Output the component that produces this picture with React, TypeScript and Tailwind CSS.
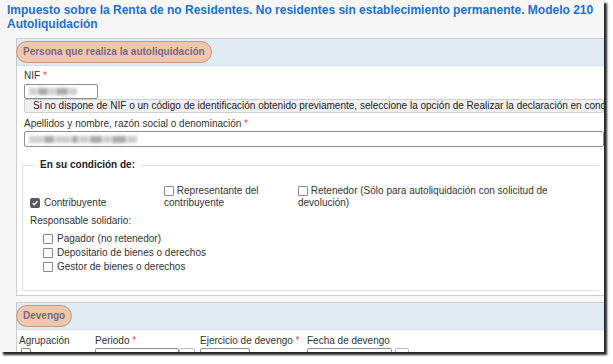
import type { ReactNode } from 'react'

const FONT = "font-['Liberation_Sans',Arial,sans-serif]"

function Req() {
  return <span className="text-[#d9534f]"> *</span>
}

function Box({ checked = false }: { checked?: boolean }) {
  if (checked) {
    return (
      <span className="inline-flex size-[10px] shrink-0 items-center justify-center rounded-[2px] bg-[#5a5a5a]">
        <svg viewBox="0 0 10 10" className="size-[8px]">
          <path d="M2 5.2 L4.1 7.2 L8 2.8" fill="none" stroke="#fff" strokeWidth="1.6" />
        </svg>
      </span>
    )
  }
  return <span className="inline-block size-[10px] shrink-0 rounded-[1px] border border-[#8a8a8a] bg-white" />
}

function Blur({ widths }: { widths: number[] }) {
  return (
    <div className="flex h-full items-center gap-[1px] pl-1 blur-[1.4px]">
      {widths.map((w, i) => (
        <span
          key={i}
          className={i % 2 ? 'h-[7px] bg-[#a9a9a9]' : 'h-[7px] bg-[#cfcfcf]'}
          style={{ width: w }}
        />
      ))}
    </div>
  )
}

function SectionHeader({ children }: { children: ReactNode }) {
  return (
    <div className="flex h-[27px] items-center border-b border-[#d5dde3] bg-[#dfeaf3]">
      <span className="-ml-px flex h-[22px] items-center rounded-full border border-[#c39a84] bg-[#f1c7ab] px-[6px] text-[10px] font-bold text-[#766a86]">
        {children}
      </span>
    </div>
  )
}

export default function App() {
  return (
    <div className={`h-[364px] w-[613px] bg-white ${FONT}`}>
      <div className="h-[352px] w-[604px] overflow-hidden bg-[#f6f6f6] shadow-[3px_3px_2px_rgba(0,0,0,0.85)]">
        <h1 className="whitespace-nowrap px-[7px] pt-[3px] text-[12px] font-bold leading-[14px] text-[#1f6fcc]">
          Impuesto sobre la Renta de no Residentes. No residentes sin establecimiento permanente. Modelo 210
          <br />
          Autoliquidación
        </h1>

        {/* Persona que realiza la autoliquidación */}
        <div className="ml-4 mt-[7px] border border-r-0 border-[#cdcdcd] bg-white text-[10px] leading-[12px] text-[#333]">
          <SectionHeader>Persona que realiza la autoliquidación</SectionHeader>
          <div className="flex flex-col pl-[7px] pt-[4px]">
            <div>
              NIF
              <Req />
            </div>
            <div className="mt-[2px] h-[15px] w-[74px] rounded-[2px] border border-[#8f8f8f]">
              <Blur widths={[8, 10, 6, 12, 8]} />
            </div>
            <div className="flex h-[14px] items-center whitespace-nowrap rounded-[2px] border border-[#cfcfcf] bg-[#efefef] pl-[8px] text-[#222]">
              Si no dispone de NIF o un código de identificación obtenido previamente, seleccione la opción de Realizar la declaración en cond
            </div>
            <div className="mt-[5px]">
              Apellidos y nombre, razón social o denominación
              <Req />
            </div>
            <div className="mt-[1px] h-[16px] rounded-[2px] border border-[#8f8f8f]">
              <Blur widths={[14, 10, 16, 6, 10, 12, 8, 14, 10]} />
            </div>
          </div>

          <fieldset className="mx-[5px] mt-[12px] mb-[4px] border border-r-0 border-[#dedede] pb-[17px] pl-[7px]">
            <legend className="ml-[4px] px-[6px] font-bold text-[#222]">En su condición de:</legend>
            <div className="mt-[14px] grid grid-cols-[134px_134px_1fr] items-end">
              <label className="flex items-center gap-[4px]">
                <Box checked />
                Contribuyente
              </label>
              <label className="block">
                <span className="inline-flex items-center align-middle">
                  <Box />
                </span>{' '}
                Representante del
                <br />
                contribuyente
              </label>
              <label className="block">
                <span className="inline-flex items-center align-middle">
                  <Box />
                </span>{' '}
                Retenedor (Sólo para autoliquidación con solicitud de
                <br />
                devolución)
              </label>
            </div>
            <div className="mt-[6px]">Responsable solidario:</div>
            <div className="mt-[6px] flex flex-col gap-[2px] pl-[13px]">
              <label className="flex items-center gap-[4px]">
                <Box />
                Pagador (no retenedor)
              </label>
              <label className="flex items-center gap-[4px]">
                <Box />
                Depositario de bienes o derechos
              </label>
              <label className="flex items-center gap-[4px]">
                <Box />
                Gestor de bienes o derechos
              </label>
            </div>
          </fieldset>
        </div>

        {/* Devengo */}
        <div className="ml-4 mt-[6px] border border-r-0 border-[#cdcdcd] bg-white text-[10px] leading-[12px] text-[#333]">
          <SectionHeader>Devengo</SectionHeader>
          <div className="flex pl-[2px] pt-[5px]">
            <div className="w-[76px]">
              <div>Agrupación</div>
              <div className="mt-[1px] pl-[2px]">
                <Box />
              </div>
            </div>
            <div className="w-[105px]">
              <div>
                Periodo
                <Req />
              </div>
              <div className="mt-[1px] flex">
                <div className="h-[16px] w-[84px] rounded-[2px] border border-[#8f8f8f]" />
                <div className="h-[16px] w-[16px] rounded-[2px] border border-[#bbb]" />
              </div>
            </div>
            <div className="w-[107px]">
              <div>
                Ejercicio de devengo
                <Req />
              </div>
              <div className="mt-[1px] h-[16px] w-[50px] rounded-[2px] border border-[#8f8f8f]" />
            </div>
            <div>
              <div>Fecha de devengo</div>
              <div className="mt-[1px] flex gap-[3px]">
                <div className="h-[16px] w-[85px] rounded-[2px] border border-[#8f8f8f]" />
                <div className="h-[16px] w-[14px] rounded-[2px] border border-[#bbb]" />
              </div>
            </div>
          </div>
        </div>
      </div>
    </div>
  )
}
